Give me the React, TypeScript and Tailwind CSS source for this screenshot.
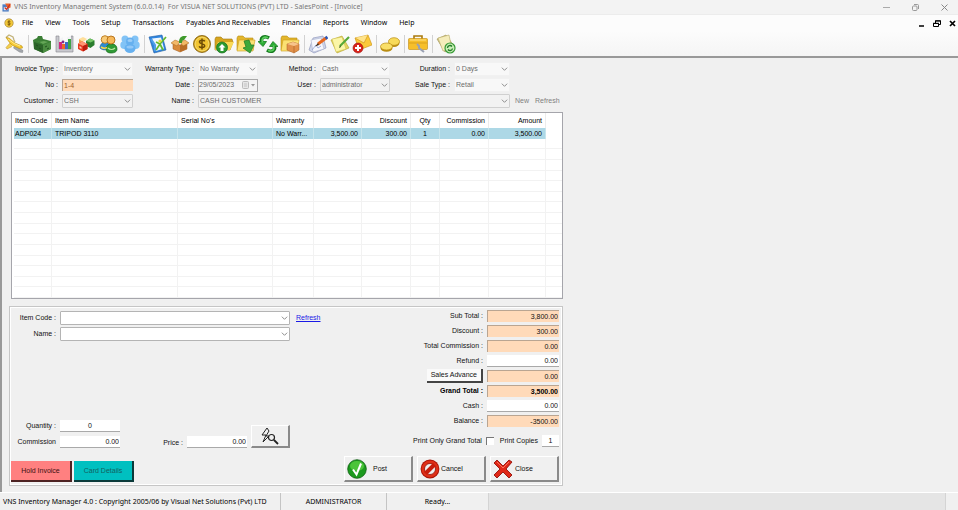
import { ReactNode } from "react";

const menus = [
  "File",
  "View",
  "Tools",
  "Setup",
  "Transactions",
  "Payables And Receivables",
  "Financial",
  "Reports",
  "Window",
  "Help",
];

const Svg = ({ children, className = "size-5" }: { children: ReactNode; className?: string }) => (
  <svg viewBox="0 0 20 20" className={className} aria-hidden="true">
    {children}
  </svg>
);

const Folder = () => (
  <>
    <path d="M1 4l1-2h5l2 2h8v12H1z" fill="#e3b62c" stroke="#b98d14" strokeWidth=".6" />
    <path d="M3 6h16l-2 11H1z" fill="#fbe173" stroke="#cf9f1d" strokeWidth=".6" />
  </>
);

const KeyIcon = () => (
  <Svg>
    <path d="M2 3.500l3-2.500 4 2 1 3 1 2" fill="none" stroke="#c2b37c" strokeWidth="1.300" />
    <path d="M11 12l8 4.500-.5 2-3-.5-6-4z" fill="#a4a8ad" stroke="#77797c" strokeWidth=".5" />
    <path d="M7 8l-5 5.500 1 1.500 5-2.500" fill="#f4cf4f" stroke="#b88d12" strokeWidth=".5" />
    <path d="M2 3.500l3 .5 6 5 7 3 .5 2-3 .5-7-3-3-3z" fill="#f7c92f" stroke="#b88d12" strokeWidth=".6" />
    <path d="M4 5l6 4.500 6 2.500" fill="none" stroke="#fff0a8" strokeWidth=".8" />
  </Svg>
);

const GreenBoxIcon = () => (
  <Svg>
    <path d="M1 6l4-2 1-2 4 0 1 3 8 2v8l-8 4-9-4z" fill="#3b7f35" />
    <path d="M2 8l9 3v8l-9-4z" fill="#2b6428" />
    <path d="M11 11l8-3v7l-8 4z" fill="#4b8d41" />
    <path d="M4 6l3 2 5-1 4 1-5 2z" fill="#65a657" />
    <path d="M4 11l2 1M7 14l2 1M13 13l2-1M15 15l2-1" stroke="#1f4f1d" />
  </Svg>
);

const ChartIcon = () => (
  <Svg>
    <path d="M2 2h3v13h12V2h2v16H2z" fill="#c9c9cf" stroke="#85858c" strokeWidth=".6" />
    <path d="M6 5l3-2v5H6zM13 3l4-1v5h-4z" fill="#f3f3f6" />
    <rect x="5" y="8" width="3" height="7" fill="#d5267b" />
    <rect x="8" y="10" width="3" height="5" fill="#f06a25" />
    <rect x="11" y="8" width="3" height="7" fill="#4069c8" />
    <rect x="14" y="5" width="3" height="10" fill="#3fa447" />
    <circle cx="9" cy="8" r="1.4" fill="#7b2d8d" />
  </Svg>
);

const CubesIcon = () => (
  <Svg>
    <path d="M3 5l4-2 4 2-4 3z" fill="#ffdf9b" />
    <path d="M3 5l4 3v3l-4-2z" fill="#f5a04a" />
    <path d="M10 7l4-2.500 4.500 2v4.500l-4 3-4.500-2z" fill="#2a7d2e" />
    <path d="M10 7l4-2.500 4.500 2-4 2z" fill="#74c566" />
    <path d="M2 9.500l4.500-2 5 2.500v5l-4.500 2.500-5-2.500z" fill="#e63a20" />
    <path d="M2 9.500l4.500-2 5 2.500-4.500 2z" fill="#ff9674" />
    <path d="M7 12l4.500-2v5l-4.500 2.500z" fill="#bd1d0e" />
    <path d="M3.500 12l2 1v2l-2-1z" fill="#ffc6b3" />
  </Svg>
);

const UsersIcon = () => (
  <Svg>
    <path d="M2 14c0-4 3-6 5-6s5 2 5 5c-2 3-7 4-10 1z" fill="#2d8bd0" stroke="#1d5f98" strokeWidth=".7" />
    <path d="M8 15c0-4 3-5 6-5s5 2 5 5-3 4-6 4-5-1-5-4z" fill="#2f9a35" stroke="#176a1d" strokeWidth=".7" />
    <circle cx="7" cy="5.500" r="3.800" fill="#f8cb78" stroke="#b87617" strokeWidth=".9" />
    <circle cx="13" cy="6" r="4" fill="#f7b95b" stroke="#b26c12" strokeWidth=".9" />
    <path d="M3 13c2 1.500 4 1.500 6 .5" stroke="#f5d44b" strokeWidth="1.600" fill="none" />
    <path d="M10 14c2 2 5 2 7 0" stroke="#b8e8a0" strokeWidth="1.200" fill="none" />
  </Svg>
);

const GroupIcon = () => (
  <Svg>
    <g fill="#82c3f6">
      <circle cx="5" cy="5" r="3.500" />
      <circle cx="15" cy="5" r="3.500" />
      <ellipse cx="4.500" cy="11" rx="4.200" ry="4" />
      <ellipse cx="15.500" cy="11" rx="4.200" ry="4" />
    </g>
    <g fill="#66b0ef">
      <circle cx="10" cy="7.500" r="4" />
      <ellipse cx="10" cy="14.500" rx="5.500" ry="4.500" />
    </g>
    <ellipse cx="10" cy="6.500" rx="2.500" ry="1.500" fill="#9accf7" />
    <ellipse cx="10" cy="13" rx="3.500" ry="1.500" fill="#92c8f7" />
  </Svg>
);

const DesignIcon = () => (
  <Svg>
    <path d="M1 3l13-2 4 15-12 3z" fill="#2f86e0" stroke="#1d5aa3" strokeWidth=".6" />
    <path d="M4 4.500l9-1 3 11-8 2.500z" fill="#eef7fe" />
    <path d="M3 5l4 6 0 6" stroke="#4f9de8" strokeWidth="2" fill="none" />
    <path d="M18 3l-6 7-4 6M12 10l3 6M8 8l4 2" stroke="#63b92e" strokeWidth="1.700" fill="none" />
    <circle cx="12" cy="7" r="1.600" fill="#e7dc3a" />
  </Svg>
);

const OpenBoxIcon = () => (
  <Svg>
    <path d="M3 9l7 2 7-2v6l-7 3-7-3z" fill="#d98a3a" stroke="#9c5a1b" strokeWidth=".5" />
    <path d="M10 11l7-2v6l-7 3z" fill="#b96d28" />
    <path d="M1 9l4-3 5 2-3 4zM19 9l-4-3-5 2 3 4z" fill="#f2b868" stroke="#a4641f" strokeWidth=".5" />
    <path d="M9 9c0-4 1-6 4-7l4 0-3 4c-2 0-2 2-2 3z" fill="#3f9a2c" />
  </Svg>
);

const CoinIcon = ({ className }: { className?: string }) => (
  <Svg className={className}>
    <circle cx="10" cy="10" r="8.500" fill="#c8950d" stroke="#7f5b06" strokeWidth=".8" />
    <circle cx="10" cy="10" r="7" fill="#f1c431" stroke="#fbe88b" strokeWidth=".8" />
    <path d="M12.800 7.300c-.6-1.200-5.300-1.600-5.300.8 0 2.200 5.200 1.300 5.200 3.700 0 2.400-4.800 2.100-5.600.6M10 4.500v11" fill="none" stroke="#6d4b05" strokeWidth="1.500" />
  </Svg>
);

const FolderUpIcon = () => (
  <Svg>
    <path d="M1 5l1-2h5l2 2h9l1 3-3 8H1z" fill="#d7a51e" stroke="#a37910" strokeWidth=".6" />
    <path d="M4 8h16l-4 8H1z" fill="#f9d956" />
    <circle cx="8" cy="13.500" r="5.500" fill="#2b9b30" stroke="#14691a" strokeWidth=".7" />
    <path d="M8 10l-3.500 3.500h2V17h3v-3.500h2z" fill="#fff" />
  </Svg>
);

const FolderDownIcon = () => (
  <Svg>
    <Folder />
    <path d="M8 7l5-1 2 5h3l-4 8-7-5 3-1z" fill="#3ca93a" stroke="#1e7a22" strokeWidth=".7" />
  </Svg>
);

const SyncIcon = () => (
  <Svg>
    <g fill="none" stroke="#14791d" strokeWidth="3.600">
      <path d="M11 4C6 1 2 4 4 8" />
      <path d="M9 16c5 3 9 0 7-4" />
    </g>
    <path d="M0 7.500l8.500 0-3.500 5zM20 12.500l-8.500 0 3.500-5z" fill="#2fae37" stroke="#14791d" strokeWidth=".8" />
    <g fill="none" stroke="#5ad05c" strokeWidth="1.600">
      <path d="M10 3.800C6 2 3 4 4.500 8.500" />
      <path d="M10 16.200c4 2 7 0 5.500-4.700" />
    </g>
  </Svg>
);

const FolderBoxIcon = () => (
  <Svg>
    <Folder />
    <path d="M7 10l6-2 6 2v6l-5 3-7-3z" fill="#e2914a" stroke="#a85f22" strokeWidth=".5" />
    <path d="M7 10l6-2 6 2-5 2z" fill="#f7c48c" />
    <path d="M14 12v7" stroke="#a85f22" strokeWidth=".6" />
  </Svg>
);

const PenPaperIcon = () => (
  <Svg>
    <path d="M5 4l10-2 3 12-12 5-5-3z" fill="#cfd5ea" stroke="#868fb5" strokeWidth=".6" />
    <path d="M3 6l10-2 3 11-11 3z" fill="#f6f7fd" stroke="#a5acc9" strokeWidth=".5" />
    <path d="M4 16l4-5 2 3 3-2" stroke="#8fa1d3" strokeWidth=".8" fill="none" />
    <path d="M18 4l-8 6" stroke="#e8681f" strokeWidth="3" />
    <path d="M10 9l-3 3.500 4-1.500z" fill="#3a2a1a" />
    <path d="M19.500 3l-2 1.500" stroke="#2d56b4" strokeWidth="3" />
  </Svg>
);

const NotePencilIcon = () => (
  <Svg>
    <path d="M1 6l11-4 7 12-12 5z" fill="#e3d560" stroke="#b5a22e" strokeWidth=".6" />
    <path d="M2 5l10-2 4 12-10 3z" fill="#fbf6a8" stroke="#cdbd47" strokeWidth=".5" />
    <path d="M19 3l-9 9" stroke="#57a938" strokeWidth="2.200" />
    <path d="M10 11l-1 3 2-1z" fill="#38561f" />
  </Svg>
);

const MailDeleteIcon = () => (
  <Svg>
    <path d="M3 4l13-3 4 10-13 5z" fill="#fbc93a" stroke="#c88f12" strokeWidth=".6" />
    <path d="M3 4l9 5 4-8" fill="#ffe38a" stroke="#c88f12" strokeWidth=".6" />
    <circle cx="6" cy="14" r="5" fill="#d8231b" stroke="#9d0f0a" strokeWidth=".6" />
    <path d="M6 11v6M3 14h6" stroke="#fff" strokeWidth="2" />
  </Svg>
);

const CoinsIcon = () => (
  <Svg>
    <ellipse cx="14" cy="9" rx="5.500" ry="4" fill="#b98d12" />
    <ellipse cx="14" cy="7.500" rx="5.500" ry="3.800" fill="#f7da59" stroke="#b98d12" strokeWidth=".7" />
    <ellipse cx="6.500" cy="14" rx="6" ry="3.800" fill="#b98d12" />
    <ellipse cx="6.500" cy="12.500" rx="6" ry="3.500" fill="#f9df68" stroke="#b98d12" strokeWidth=".7" />
  </Svg>
);

const ToolboxIcon = () => (
  <Svg>
    <path d="M6 5V2h8v3" fill="none" stroke="#a9790d" strokeWidth="1.600" />
    <rect x=".5" y="4.500" width="19" height="11" rx="1" fill="#f6bf2a" stroke="#c08a10" strokeWidth=".6" />
    <path d="M1 9h18" stroke="#d9a11c" />
    <path d="M2 6h16" stroke="#ffe182" />
    <path d="M9 10l2 2 0 2 5 4" stroke="#9aa1b3" strokeWidth="2" fill="none" />
  </Svg>
);

const RecycleIcon = () => (
  <Svg>
    <path d="M1 5l9-4 8 11-9 6z" fill="#d9cd92" stroke="#9b8d49" strokeWidth=".6" />
    <path d="M2 4l11-3 3 14-9 2z" fill="#f5edbb" stroke="#b7aa67" strokeWidth=".6" />
    <circle cx="14" cy="14" r="5" fill="#c9efb6" stroke="#379a35" strokeWidth="1.200" />
    <path d="M11.500 14a2.500 2.500 0 0 1 4.500-1.500M16.500 14.500a2.500 2.500 0 0 1-4.500 1" fill="none" stroke="#237e28" strokeWidth="1.300" />
  </Svg>
);

const toolGroups = [
  [{ name: "Login", Icon: KeyIcon }],
  [
    { name: "Items", Icon: GreenBoxIcon },
    { name: "Charts", Icon: ChartIcon },
    { name: "Categories", Icon: CubesIcon },
    { name: "Users", Icon: UsersIcon },
    { name: "Customers", Icon: GroupIcon },
  ],
  [
    { name: "Invoice", Icon: DesignIcon },
    { name: "Receive", Icon: OpenBoxIcon },
    { name: "Payment", Icon: CoinIcon },
    { name: "Upload", Icon: FolderUpIcon },
    { name: "Download", Icon: FolderDownIcon },
    { name: "Transfer", Icon: SyncIcon },
    { name: "Stock", Icon: FolderBoxIcon },
  ],
  [
    { name: "Write", Icon: PenPaperIcon },
    { name: "Note", Icon: NotePencilIcon },
    { name: "Remove", Icon: MailDeleteIcon },
  ],
  [{ name: "Cash", Icon: CoinsIcon }],
  [{ name: "Toolbox", Icon: ToolboxIcon }],
  [{ name: "Reports", Icon: RecycleIcon }],
];

const Chevron = () => (
  <svg viewBox="0 0 8 8" className="pointer-events-none absolute top-1/2 right-[2px] size-[7px] -translate-y-1/2" aria-hidden="true">
    <path d="M1 2.500l3 3 3-3" fill="none" stroke="#8a8a8a" strokeWidth="1.100" />
  </svg>
);

interface PickProps {
  id: string;
  value?: string;
  tone?: "flat" | "boxed" | "open";
  className?: string;
}

const tones = {
  flat: "bg-[#f8f8f8] border-[#f1f1f1] text-[#6d6d6d]",
  boxed: "bg-[#f2f2f2] border-[#d0d0d0] text-[#6d6d6d]",
  open: "bg-white border-[#b4b4b4] text-black",
};

function Pick({ id, value = "", tone = "flat", className = "" }: PickProps) {
  return (
    <div className={`relative ${className}`}>
      <select
        id={id}
        defaultValue={value}
        disabled={tone !== "open"}
        className={`block h-[14px] w-full appearance-none rounded-[1px] border pl-px opacity-100 ${tones[tone]}`}
      >
        <option>{value}</option>
      </select>
      <Chevron />
    </div>
  );
}

const Label = ({ htmlFor, children }: { htmlFor: string; children: ReactNode }) => (
  <label htmlFor={htmlFor} className="text-right whitespace-nowrap">
    {children}
  </label>
);

function InvoiceHeader() {
  return (
    <div className="grid auto-rows-[14px] grid-cols-[49px_71px_57px_60px_54px_70px_56px_56px_1fr] items-center gap-x-1 gap-y-[2px]">
      <Label htmlFor="type">Invoice Type :</Label>
      <Pick id="type" value="Inventory" />
      <Label htmlFor="warranty">Warranty Type :</Label>
      <Pick id="warranty" value="No Warranty" />
      <Label htmlFor="method">Method :</Label>
      <Pick id="method" value="Cash" />
      <Label htmlFor="duration">Duration :</Label>
      <Pick id="duration" value="0 Days" />
      <span />

      <Label htmlFor="no">No :</Label>
      <input id="no" defaultValue="1-4" className="h-3 w-full border-t border-l border-[#b9a592] bg-[#ffdab9] pl-px text-[#a0622d]" />
      <Label htmlFor="date">Date :</Label>
      <div className="flex h-[13px] items-center border border-[#a8a8a8] bg-[#f4f4f4] pr-px">
        <input id="date" defaultValue="29/05/2023" disabled className="w-full min-w-0 text-[#6d6d6d]" />
        <svg viewBox="0 0 14 8" className="h-2 w-[14px] shrink-0" aria-hidden="true">
          <rect x=".5" y=".5" width="6" height="7" rx="1" fill="#e6e6e6" stroke="#bbb" />
          <path d="M2 3h3M2 5h3" stroke="#c4c4c4" />
          <path d="M9 3h4l-2 2.500z" fill="#999" />
        </svg>
      </div>
      <Label htmlFor="user">User :</Label>
      <Pick id="user" value="administrator" tone="boxed" />
      <Label htmlFor="sale">Sale Type :</Label>
      <Pick id="sale" value="Retail" />
      <span />

      <Label htmlFor="customer">Customer :</Label>
      <Pick id="customer" value="CSH" tone="boxed" />
      <Label htmlFor="name">Name :</Label>
      <Pick id="name" value="CASH CUSTOMER" tone="boxed" className="col-span-5" />
      <div className="flex gap-[6px] pl-px text-[#808080]">
        <button disabled>New</button>
        <button disabled>Refresh</button>
      </div>
    </div>
  );
}

const columns = [
  { title: "Item Code", value: "ADP024", width: "w-[38px]", align: "text-left" },
  { title: "Item Name", value: "TRIPOD 3110", width: "w-[126px]", align: "text-left" },
  { title: "Serial No's", value: "", width: "w-[95px]", align: "text-left" },
  { title: "Warranty", value: "No Warr...", width: "w-[41px]", align: "text-left" },
  { title: "Price", value: "3,500.00", width: "w-[48px]", align: "text-right" },
  { title: "Discount", value: "300.00", width: "w-[49px]", align: "text-right" },
  { title: "Qty", value: "1", width: "w-[29px]", align: "text-center" },
  { title: "Commission", value: "0.00", width: "w-[49px]", align: "text-right" },
  { title: "Amount", value: "3,500.00", width: "w-[57px]", align: "text-right" },
];

function ItemsTable() {
  return (
    <div className="mt-1 ml-[2px] h-[187px] border border-[#a5a5ab] bg-white pl-[2px]">
      <table className="h-full w-full table-fixed border-separate border-spacing-0 leading-none text-black">
        <thead>
          <tr className="h-[15px]">
            {columns.map((col) => (
              <th key={col.title} className={`${col.width} ${col.align} border-r border-[#ececec] px-[3px] font-normal first:pl-px`}>
                {col.title}
              </th>
            ))}
            <td />
          </tr>
        </thead>
        <tbody>
          <tr className="h-[10px]">
            {columns.map((col) => (
              <td key={col.title} className={`${col.align} border-r border-[#c5e4ec] bg-[#add8e6] px-[3px] whitespace-nowrap first:pl-px`}>
                {col.value}
              </td>
            ))}
            <td />
          </tr>
          {Array.from({ length: 15 }, (_, row) => (
            <tr key={row} className="h-[10px]">
              {columns.map((col) => (
                <td key={col.title} className="border-r border-b border-[#f2f2f2]" />
              ))}
              <td className="border-b border-[#f2f2f2]" />
            </tr>
          ))}
        </tbody>
      </table>
    </div>
  );
}

const totals = [
  { label: "Sub Total :", value: "3,800.00" },
  { label: "Discount :", value: "300.00" },
  { label: "Total Commission :", value: "0.00" },
  { label: "Refund :", value: "0.00", editable: true },
  { label: "Sales Advance", value: "0.00", button: true },
  { label: "Grand Total :", value: "3,500.00", bold: true },
  { label: "Cash :", value: "0.00", editable: true },
  { label: "Balance :", value: "-3500.00" },
];

const editBox = "h-3 border-b border-[#a9a9a9] bg-white";
const raised = "border-t border-l border-t-white border-l-white border-r-2 border-b-2 border-r-[#8a8a8a] border-b-[#8a8a8a] bg-[#f0f0f0]";

function Totals() {
  return (
    <div className="flex flex-col items-end gap-[7px]">
      <div className="grid auto-rows-[12px] grid-cols-[auto_72px] items-center gap-x-1 gap-y-[3px]">
        {totals.map((row) => (
          <div key={row.label} className={`contents ${row.bold ? "font-bold text-black" : ""}`}>
            {row.button ? (
              <button className="h-[14px] justify-self-end border-r-2 border-b-2 border-[#444] bg-[#fafafa] px-1">
                {row.label}
              </button>
            ) : (
              <Label htmlFor={row.label}>{row.label}</Label>
            )}
            <input
              id={row.label}
              aria-label={row.label}
              defaultValue={row.value}
              readOnly={!row.editable}
              className={`w-full pr-px text-right ${row.editable ? editBox : "h-3 border-t border-l border-[#b9a592] bg-[#ffdab9]"}`}
            />
          </div>
        ))}
      </div>
      <div className="flex h-[14px] items-center">
        <label htmlFor="only">Print Only Grand Total</label>
        <input id="only" type="checkbox" className="mr-[6px] ml-1 size-2 appearance-none border-t border-l border-[#777] bg-white" />
        <label htmlFor="copies">Print Copies</label>
        <input id="copies" defaultValue="1" className={`ml-1 w-[17px] text-center ${editBox}`} />
      </div>
    </div>
  );
}

function EntryFields() {
  return (
    <div className="flex flex-col justify-between pt-px">
      <div className="grid auto-rows-[14px] grid-cols-[45px_230px_auto] items-center gap-x-1 gap-y-[2px]">
        <Label htmlFor="item">Item Code :</Label>
        <Pick id="item" tone="open" />
        <a href="#refresh" className="pl-[2px] text-[#1a1ae6] underline">
          Refresh
        </a>
        <Label htmlFor="itemName">Name :</Label>
        <Pick id="itemName" tone="open" />
      </div>
      <div className="flex w-[279px] items-end justify-between">
        <div className="grid auto-rows-[12px] grid-cols-[45px_60px] items-center gap-x-1 gap-y-1">
          <Label htmlFor="qty">Quantity :</Label>
          <input id="qty" defaultValue="0" className={`w-full text-center ${editBox}`} />
          <Label htmlFor="commission">Commission</Label>
          <input id="commission" defaultValue="0.00" className={`w-full pr-px text-right ${editBox}`} />
        </div>
        <div className="flex items-end gap-1">
          <Label htmlFor="price">Price :</Label>
          <input id="price" defaultValue="0.00" className={`w-[60px] pr-px text-right ${editBox}`} />
          <button aria-label="Find price" className={`flex h-[23px] w-[39px] items-center justify-center ${raised}`}>
            <svg viewBox="0 0 18 18" className="size-[18px]" fill="none" stroke="#222" aria-hidden="true">
              <path d="M6 1L1 8h4l-3 7 6-6H5l3-5z" strokeWidth="1" />
              <circle cx="10.500" cy="10.500" r="3" strokeWidth="1.200" />
              <path d="M13 13l4 4" strokeWidth="1.800" />
            </svg>
          </button>
        </div>
      </div>
    </div>
  );
}

const PostIcon = () => (
  <Svg>
    <circle cx="10" cy="10" r="9.300" fill="#1c9a1e" stroke="#116114" strokeWidth=".8" />
    <ellipse cx="10" cy="7" rx="7" ry="5" fill="#4cc43a" />
    <path d="M6 10.500l3.500 5 4.500-11" fill="none" stroke="#fff" strokeWidth="2" />
  </Svg>
);

const CancelIcon = () => (
  <Svg>
    <circle cx="10" cy="10" r="9.400" fill="#a81206" />
    <circle cx="10" cy="10" r="8.500" fill="#df3018" />
    <circle cx="10" cy="10" r="5.500" fill="#f0f0f0" stroke="#8d0f06" strokeWidth=".8" />
    <path d="M5.500 14.500l9-9" stroke="#c81d0c" strokeWidth="4" />
  </Svg>
);

const CloseIcon = () => (
  <Svg>
    <path d="M4 1l6 6 6-6 3 2-6 7 6 6-3 3-6-6-6 6-3-3 6-6-6-6z" fill="#e02817" stroke="#94120a" strokeWidth=".9" />
    <path d="M4 3l6 6 6-6" fill="none" stroke="#ff7b63" strokeWidth=".9" />
  </Svg>
);

function ActionBar() {
  const big = `flex h-[26px] w-[69px] items-center pl-[2px] ${raised}`;
  return (
    <div className="mt-2 flex items-end justify-between">
      <div className="flex gap-[2px]">
        <button className="h-[21px] w-[61px] border-r-2 border-b-2 border-[#4d2222] bg-[#ff8080] text-[#3b1111]">Hold Invoice</button>
        <button className="h-[21px] w-[60px] border-r-2 border-b-2 border-[#0b3a3a] bg-[#00c0c0] text-[#146060]">Card Details</button>
      </div>
      <div className="flex gap-1">
        <button className={`${big} gap-[6px]`}>
          <PostIcon />
          Post
        </button>
        <button className={`${big} gap-px`}>
          <CancelIcon />
          Cancel
        </button>
        <button className={`${big} gap-[2px]`}>
          <CloseIcon />
          Close
        </button>
      </div>
    </div>
  );
}

function TitleBar() {
  return (
    <header className="flex h-[14px] items-center bg-[#f3f3f3] pr-[10px] pl-[2px] text-[#777]">
      <Svg className="size-[9px]">
        <rect x="1" y="3" width="14" height="16" fill="#4d7ec4" />
        <path d="M4 9h8v7H4z" fill="#dfe9f7" />
        <path d="M7 1h12v9l-6 3z" fill="#e8632a" />
        <path d="M6 10l4 4 8-11" fill="none" stroke="#d12c1c" strokeWidth="2.500" />
      </Svg>
      <h1 className="ml-[3px] whitespace-pre">
        {"VNS Inventory Management System (6.0.0.14)  For VISUA NET SOLUTIONS (PVT) LTD - SalesPoint - [Invoice]"}
      </h1>
      <div className="ml-auto flex gap-[22px]">
        <button aria-label="Minimize window">
          <svg viewBox="0 0 7 7" className="size-[7px]" stroke="#aaa">
            <path d="M0 3.500h7" />
          </svg>
        </button>
        <button aria-label="Restore window">
          <svg viewBox="0 0 7 7" className="size-[7px]" fill="none" stroke="#999">
            <rect x=".5" y="2" width="4.500" height="4.500" rx="1" />
            <path d="M2 .5h3.500a1 1 0 0 1 1 1V5" />
          </svg>
        </button>
        <button aria-label="Close window">
          <svg viewBox="0 0 7 7" className="size-[7px]" stroke="#888">
            <path d="M.5.5l6 6M6.500.5l-6 6" />
          </svg>
        </button>
      </div>
    </header>
  );
}

function MenuBar() {
  return (
    <nav className="flex h-[17px] items-center border-t border-[#ececec] bg-[#fcfcfc] pr-[2px] pl-1 text-black">
      <CoinIcon className="mr-[8px] size-[10px]" />
      <div className="flex gap-3">
        {menus.map((menu) => (
          <button key={menu}>{menu}</button>
        ))}
      </div>
      <div className="ml-auto flex items-center gap-2">
        <button aria-label="Minimize invoice">
          <svg viewBox="0 0 7 7" className="size-[7px]" stroke="#000" strokeWidth="1.500">
            <path d="M1 6h5" />
          </svg>
        </button>
        <button aria-label="Restore invoice">
          <svg viewBox="0 0 8 7" className="h-[7px] w-2" fill="none" stroke="#000">
            <path d="M2.500 3V.8H7.500V4.500H6M2 1h6" />
            <path d="M.5 3.500h5v3h-5zM0 3.300h6" />
          </svg>
        </button>
        <button aria-label="Close invoice">
          <svg viewBox="0 0 7 7" className="size-[7px]" stroke="#000" strokeWidth="1.700">
            <path d="M1 1l5 5M6 1L1 6" />
          </svg>
        </button>
      </div>
    </nav>
  );
}

function Toolbar() {
  return (
    <div className="flex h-[25px] items-center bg-linear-to-b from-[#fcfcfc] to-[#f5f5f5] pl-[3px]">
      {toolGroups.map((group, index) => (
        <div key={index} className="flex items-center">
          {index > 0 && <span className="mr-[2px] ml-[3px] h-[18px] w-px bg-[#d2d2d2]" />}
          {group.map(({ name, Icon }) => (
            <button key={name} aria-label={name} className="flex w-[22px] justify-center">
              <Icon />
            </button>
          ))}
        </div>
      ))}
    </div>
  );
}

export default function App() {
  return (
    <div className="flex min-h-screen flex-col bg-[#f0f0f0] font-['Noto_Sans','Open_Sans',sans-serif] text-[7px] leading-[10px] text-[#111]">
      <TitleBar />
      <MenuBar />
      <Toolbar />
      <main className="flex-1 border-t-2 border-l-2 border-[#999] pt-1 pl-[7px] font-['Liberation_Sans',Arial,sans-serif]">
        <div className="w-full max-w-[554px]">
          <InvoiceHeader />
          <ItemsTable />
          <section className="mt-[7px] border border-[#c6c6c6] py-[3px] pr-[3px] pl-px shadow-[inset_1px_1px_0_#fff,inset_-1px_-1px_0_#fff]">
            <div className="flex justify-between">
              <EntryFields />
              <Totals />
            </div>
            <ActionBar />
          </section>
        </div>
      </main>
      <footer className="flex h-[18px] items-center border-t border-white bg-[#e5e5e5] text-black *:flex *:h-full *:items-center *:bg-[#f0f0f0]">
        <span className="w-[281px] border-r border-[#c4c4c4] pl-[3px]">
          VNS Inventory Manager 4.0 : Copyright 2005/06 by Visual Net Solutions (Pvt) LTD
        </span>
        <span className="w-[106px] justify-center border-r border-[#c4c4c4]">ADMINISTRATOR</span>
        <span className="w-[102px] justify-center border-r border-[#d4d4d4]">Ready...</span>
        <span className="ml-auto w-[13px] border-l border-[#d4d4d4]" />
      </footer>
    </div>
  );
}
